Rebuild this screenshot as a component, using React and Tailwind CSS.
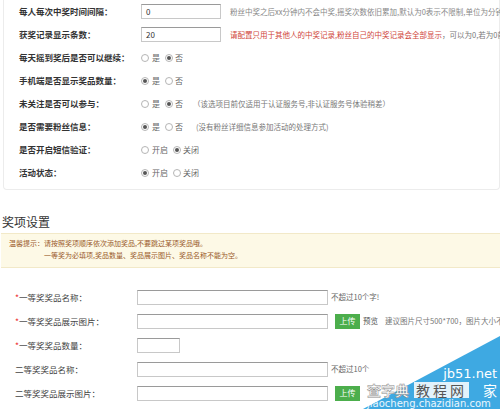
import React from "react";

const F = { fontFamily: '"Noto Sans CJK SC", "Noto Sans", sans-serif' };

function Radio({ on }) {
  return (
    <span className="inline-flex items-center justify-center w-[8px] h-[8px] rounded-full border border-[#b5b5b5] bg-white shrink-0">
      {on ? <span className="w-[4px] h-[4px] rounded-full bg-[#555]" /> : null}
    </span>
  );
}

function RadioPair({ a, b, sel }) {
  return (
    <div className="flex items-center text-[8px] text-[#666]">
      <Radio on={sel === 0} />
      <span className="ml-[3px] mr-[5px]">{a}</span>
      <Radio on={sel === 1} />
      <span className="ml-[2px]">{b}</span>
    </div>
  );
}

function TopRow({ label, children }) {
  return (
    <div className="flex items-center h-[23px] whitespace-nowrap">
      <div className="w-[137px] pl-[15px] shrink-0 text-[8.5px] font-bold text-[#333]">{label}</div>
      {children}
    </div>
  );
}

function BottomRow({ label, req, children }) {
  return (
    <div className="flex items-center h-[24px] whitespace-nowrap">
      <div className="w-[137px] pl-[15px] shrink-0 text-[8.5px] text-[#444]">
        {req ? <span className="text-[#e33]">*</span> : null}
        {label}
      </div>
      {children}
    </div>
  );
}

const inputCls =
  "h-[15px] border border-[#c8c8c8] border-t-[#9a9a9a] bg-white text-[8px] text-[#333] pl-[4px] flex items-center shrink-0";

function Upload() {
  return (
    <span className="ml-[7px] w-[25px] h-[15px] bg-[#4cae4c] text-white text-[8px] flex items-center justify-center shrink-0">
      上传
    </span>
  );
}

export default function App() {
  return (
    <div className="w-[500px] h-[409px] bg-white overflow-hidden relative" style={F}>
      <div className="ml-[3px] border-x border-b border-[#ececec] rounded-b-[4px] pb-[5px]">
        <TopRow label="每人每次中奖时间间隔：">
          <div className={inputCls + " w-[80px]"}>0</div>
          <span className="ml-[9px] text-[7.5px] text-[#888]">
            粉丝中奖之后xx分钟内不会中奖,摇奖次数依旧累加,默认为0表示不限制,单位为分钟
          </span>
        </TopRow>
        <TopRow label="获奖记录显示条数：">
          <div className={inputCls + " w-[80px]"}>20</div>
          <span className="ml-[9px] text-[7.5px]">
            <span className="text-[#d0453a]">请配置只用于其他人的中奖记录,粉丝自己的中奖记录会全部显示</span>
            <span className="text-[#777]">，可以为0,若为0前</span>
          </span>
        </TopRow>
        <TopRow label="每天摇到奖后是否可以继续：">
          <RadioPair a="是" b="否" sel={1} />
        </TopRow>
        <TopRow label="手机端是否显示奖品数量：">
          <RadioPair a="是" b="否" sel={0} />
        </TopRow>
        <TopRow label="未关注是否可以参与：">
          <RadioPair a="是" b="否" sel={1} />
          <span className="ml-[10px] text-[7.5px] text-[#777]">（该选项目前仅适用于认证服务号,非认证服务号体验稍差）</span>
        </TopRow>
        <TopRow label="是否需要粉丝信息：">
          <RadioPair a="是" b="否" sel={0} />
          <span className="ml-[13px] text-[7.5px] text-[#777]">(没有粉丝详细信息参加活动的处理方式)</span>
        </TopRow>
        <TopRow label="是否开启短信验证：">
          <RadioPair a="开启" b="关闭" sel={1} />
        </TopRow>
        <TopRow label="活动状态：">
          <RadioPair a="开启" b="关闭" sel={0} />
        </TopRow>
      </div>

      <div className="mt-[24px] pl-[2px] h-[16px] text-[12px] leading-[16px] text-[#333]">奖项设置</div>

      <div className="mt-[3px] ml-[1px] h-[35px] bg-[#fdf9e6] border-y border-[#f2e9c8] pt-[3px] text-[7px] leading-[12px] text-[#9a5a2a] whitespace-nowrap">
        <div className="pl-[8px]">温馨提示：请按照奖项顺序依次添加奖品,不要跳过某项奖品哦。</div>
        <div className="pl-[43px]">一等奖为必填项,奖品数量、奖品展示图片、奖品名称不能为空。</div>
      </div>

      <div className="mt-[17px]">
        <BottomRow label="一等奖奖品名称：" req>
          <div className={inputCls + " w-[191px]"} />
          <span className="ml-[3px] text-[7.5px] text-[#666]">不超过10个字!</span>
        </BottomRow>
        <BottomRow label="一等奖奖品展示图片：" req>
          <div className={inputCls + " w-[191px]"} />
          <Upload />
          <span className="ml-[3px] text-[7.5px] text-[#555]">预览</span>
          <span className="ml-[7px] text-[7.5px] text-[#777]">建议图片尺寸500*700，图片大小不超过200k</span>
        </BottomRow>
        <BottomRow label="一等奖奖品数量：" req>
          <div className={inputCls + " w-[43px]"} />
        </BottomRow>
        <BottomRow label="二等奖奖品名称：">
          <div className={inputCls + " w-[191px]"} />
          <span className="ml-[3px] text-[7.5px] text-[#666]">不超过10个</span>
        </BottomRow>
        <BottomRow label="二等奖奖品展示图片：">
          <div className={inputCls + " w-[191px]"} />
          <Upload />
        </BottomRow>
      </div>

      {/* watermark */}
      <div className="absolute right-0 bottom-0 w-[145px] h-[75px] pointer-events-none">
        <svg className="absolute inset-0" width="145" height="75" viewBox="0 0 145 75">
          <polygon points="145,2 145,75 8,75" fill="#3ea9e2" />
        </svg>
        <div className="absolute right-[3px] top-[33px] text-[13px] leading-[14px] text-white" style={{ fontFamily: '"DejaVu Sans", sans-serif' }}>
          jb51.net
        </div>
        <div className="absolute left-[12px] top-[48px] flex items-center text-[14px] leading-[16px]">
          <span className="text-white font-bold [-webkit-text-stroke:0.5px_#888]">查字典</span>
          <span className="ml-[5px] px-[2px] bg-white/85 text-[#555] tracking-[3px]">教程网</span>
          <span className="ml-[14px] text-white">家</span>
        </div>
        <div className="absolute left-[12px] top-[64px] text-[10px] leading-[11px] text-white/90" style={{ fontFamily: '"DejaVu Sans", sans-serif' }}>
          jiaocheng.chazidian.com
        </div>
      </div>
    </div>
  );
}
